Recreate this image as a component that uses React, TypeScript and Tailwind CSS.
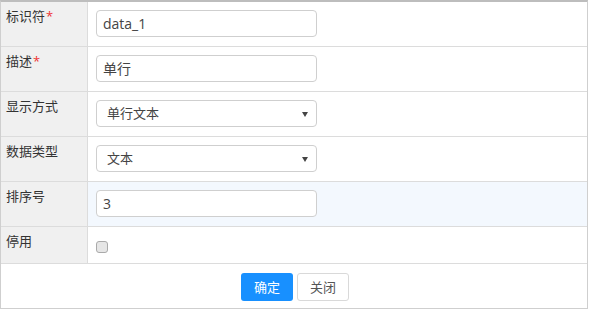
import React from "react";

const font = { fontFamily: '"Open Sans", "Noto Sans CJK SC", sans-serif' };

function Caret() {
  return (
    <svg width="6" height="5" viewBox="0 0 6 5" className="absolute right-[8px] top-[11px]">
      <path d="M0 0 L6 0 L3 5 Z" fill="#444" />
    </svg>
  );
}

function Row({
  label,
  required,
  h,
  bg,
  children,
}: {
  label: string;
  required?: boolean;
  h: string;
  bg?: string;
  children: React.ReactNode;
}) {
  return (
    <div className={`flex border-b border-[#dcdcdc] ${h}`}>
      <div className="w-[87px] shrink-0 bg-[#f0f0f0] border-r border-[#dcdcdc] pl-[5px] pt-[5px] text-[13px] leading-[18px] text-[#333]">
        {label}
        {required && <span className="text-[#e33] ml-[1px]">*</span>}
      </div>
      <div className={`flex-1 pl-[8px] pt-[8px] ${bg ?? "bg-white"}`}>{children}</div>
    </div>
  );
}

function Input({ value }: { value: string }) {
  return (
    <div className="w-[221px] h-[27px] border border-[#cfcfcf] rounded-[4px] bg-white px-[6px] text-[14px] leading-[25px] text-[#444]">
      {value}
    </div>
  );
}

function Select({ value }: { value: string }) {
  return (
    <div className="relative w-[221px] h-[27px] border border-[#cfcfcf] rounded-[4px] bg-white pl-[10px] text-[13px] leading-[25px] text-[#444]">
      {value}
      <Caret />
    </div>
  );
}

export default function App() {
  return (
    <div className="w-[590px] h-[310px] bg-white" style={font}>
      <div className="w-[588px] border-t-2 border-t-[#bdbdbd] border-l border-r border-[#cfcfcf] border-b">
        <Row label="标识符" required h="h-[45px]">
          <Input value="data_1" />
        </Row>
        <Row label="描述" required h="h-[45px]">
          <Input value="单行" />
        </Row>
        <Row label="显示方式" h="h-[45px]">
          <Select value="单行文本" />
        </Row>
        <Row label="数据类型" h="h-[45px]">
          <Select value="文本" />
        </Row>
        <Row label="排序号" h="h-[45px]" bg="bg-[#f3f8fe]">
          <Input value="3" />
        </Row>
        <Row label="停用" h="h-[37px]">
          <div className="pt-[6px]">
            <div className="w-[12px] h-[12px] rounded-[3px] border border-[#aaa] bg-[#e6e6e6]" />
          </div>
        </Row>
        <div className="h-[44px] flex items-center justify-center gap-[4px] pt-[1px] pl-[2px]">
          <div className="w-[52px] h-[28px] rounded-[3px] bg-[#1890ff] text-white text-[13px] leading-[28px] text-center">
            确定
          </div>
          <div className="w-[52px] h-[28px] rounded-[3px] border border-[#d9d9d9] bg-white text-[#555] text-[13px] leading-[26px] text-center">
            关闭
          </div>
        </div>
      </div>
    </div>
  );
}
